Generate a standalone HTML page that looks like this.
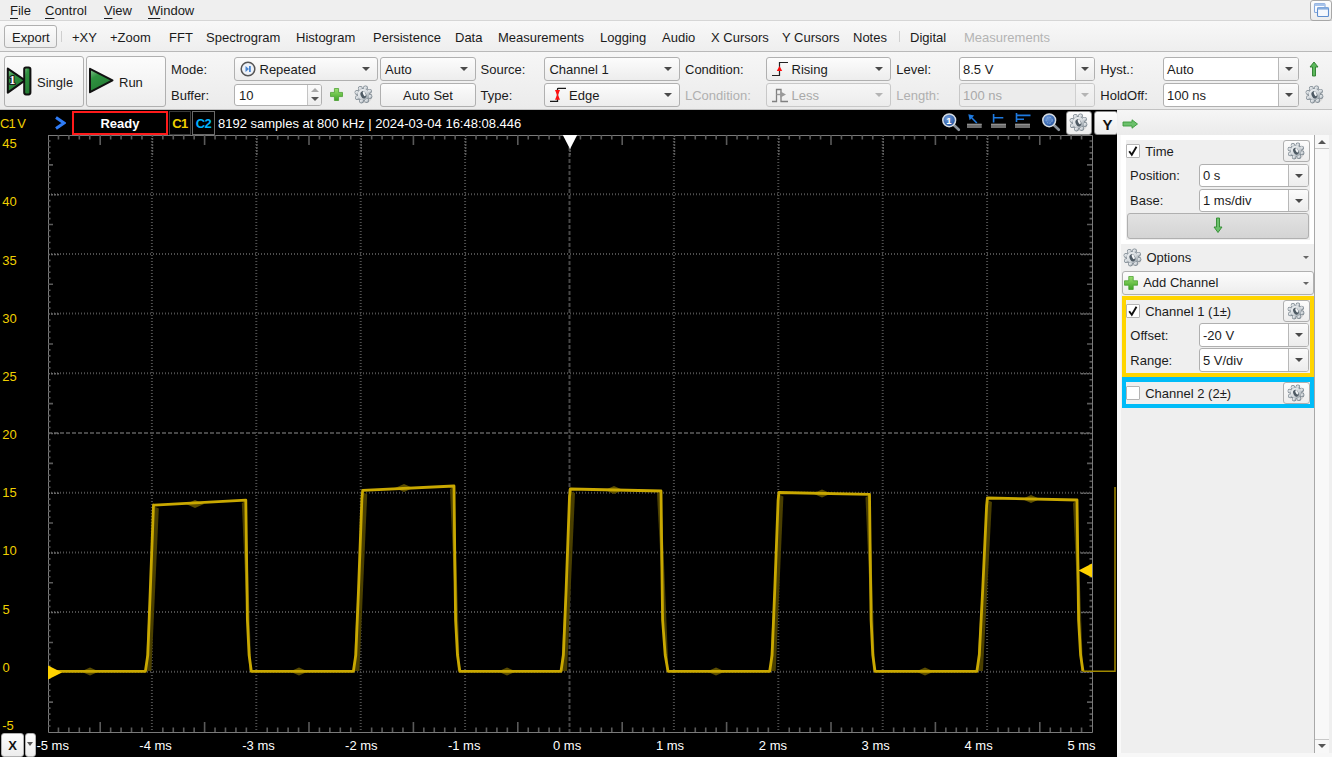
<!DOCTYPE html><html><head><meta charset="utf-8"><style>
html,body{margin:0;padding:0;}
body{width:1332px;height:757px;overflow:hidden;position:relative;background:#efefef;font-family:"Liberation Sans", sans-serif;}
.t{position:absolute;white-space:nowrap;}
u{text-decoration:none;border-bottom:1px solid currentColor;}
</style></head><body>
<div style="position:absolute;left:0px;top:0px;width:1332px;height:21px;box-sizing:border-box;background:#efefef;border-bottom:1px solid #d6d6d6;"></div>
<div class="t" style="left:10px;top:3.00px;font-size:13px;line-height:15px;color:#1b1b1b;"><span style="text-decoration:underline;text-underline-offset:2.5px;text-decoration-thickness:1.4px">F</span>ile</div>
<div class="t" style="left:45px;top:3.00px;font-size:13px;line-height:15px;color:#1b1b1b;"><span style="text-decoration:underline;text-underline-offset:2.5px;text-decoration-thickness:1.4px">C</span>ontrol</div>
<div class="t" style="left:104px;top:3.00px;font-size:13px;line-height:15px;color:#1b1b1b;"><span style="text-decoration:underline;text-underline-offset:2.5px;text-decoration-thickness:1.4px">V</span>iew</div>
<div class="t" style="left:148px;top:3.00px;font-size:13px;line-height:15px;color:#1b1b1b;"><span style="text-decoration:underline;text-underline-offset:2.5px;text-decoration-thickness:1.4px">W</span>indow</div>
<div style="position:absolute;left:1310px;top:0px;width:22px;height:21px;box-sizing:border-box;border:1px solid #a8a8a8;border-radius:3px;background:linear-gradient(#fdfdfd,#ececec);"></div>
<svg style="position:absolute;left:1313px;top:2px" width="18" height="16"><defs><linearGradient id="rw" x1="0" y1="0" x2="0" y2="1"><stop offset="0" stop-color="#9dbde6"/><stop offset="1" stop-color="#6f9cd6"/></linearGradient></defs><rect x="1.5" y="1.5" width="10.5" height="9" rx="1" fill="#fafcff" stroke="#86a9dc" stroke-width="1.1"/><rect x="1.5" y="1.5" width="10.5" height="2.5" fill="#a7c3ea"/><rect x="4.5" y="5.5" width="11" height="9" rx="1" fill="#f5f8fd" stroke="#5f8fd0" stroke-width="1.1"/><rect x="4.5" y="5.5" width="11" height="2" fill="url(#rw)"/></svg>
<div style="position:absolute;left:0px;top:21px;width:1332px;height:31px;box-sizing:border-box;background:linear-gradient(#f8f8f8,#eeeeee);border-bottom:1px solid #b9b9b9;"></div>
<div style="position:absolute;left:4px;top:25px;width:53px;height:23px;box-sizing:border-box;border:1px solid #b0b0b0;border-radius:3px;background:linear-gradient(#fcfcfc,#ededed);"></div>
<div class="t" style="left:12px;top:29.70px;font-size:13px;line-height:15px;color:#1b1b1b;">Export</div>
<div style="position:absolute;left:61px;top:31px;width:1px;height:11px;box-sizing:border-box;background:#cfcfcf;"></div>
<div class="t" style="left:72px;top:29.70px;font-size:13px;line-height:15px;color:#1b1b1b;">+XY</div>
<div class="t" style="left:110px;top:29.70px;font-size:13px;line-height:15px;color:#1b1b1b;">+Zoom</div>
<div class="t" style="left:169px;top:29.70px;font-size:13px;line-height:15px;color:#1b1b1b;">FFT</div>
<div class="t" style="left:206px;top:29.70px;font-size:13px;line-height:15px;color:#1b1b1b;">Spectrogram</div>
<div class="t" style="left:296px;top:29.70px;font-size:13px;line-height:15px;color:#1b1b1b;">Histogram</div>
<div class="t" style="left:373px;top:29.70px;font-size:13px;line-height:15px;color:#1b1b1b;">Persistence</div>
<div class="t" style="left:455px;top:29.70px;font-size:13px;line-height:15px;color:#1b1b1b;">Data</div>
<div class="t" style="left:498px;top:29.70px;font-size:13px;line-height:15px;color:#1b1b1b;">Measurements</div>
<div class="t" style="left:600px;top:29.70px;font-size:13px;line-height:15px;color:#1b1b1b;">Logging</div>
<div class="t" style="left:662px;top:29.70px;font-size:13px;line-height:15px;color:#1b1b1b;">Audio</div>
<div class="t" style="left:711px;top:29.70px;font-size:13px;line-height:15px;color:#1b1b1b;">X Cursors</div>
<div class="t" style="left:782px;top:29.70px;font-size:13px;line-height:15px;color:#1b1b1b;">Y Cursors</div>
<div class="t" style="left:853px;top:29.70px;font-size:13px;line-height:15px;color:#1b1b1b;">Notes</div>
<div class="t" style="left:910px;top:29.70px;font-size:13px;line-height:15px;color:#1b1b1b;">Digital</div>
<div style="position:absolute;left:899px;top:31px;width:1px;height:11px;box-sizing:border-box;background:#d0d0d0;"></div>
<div class="t" style="left:964px;top:29.70px;font-size:13px;line-height:15px;color:#b4b4b4;">Measurements</div>
<div style="position:absolute;left:0px;top:52px;width:1332px;height:58px;box-sizing:border-box;background:linear-gradient(#f6f6f6,#ebebeb);border-bottom:1px solid #c2c2c2;"></div>
<div style="position:absolute;left:4px;top:56px;width:80px;height:51px;box-sizing:border-box;border:1px solid #b0b0b0;border-radius:3px;background:linear-gradient(#fcfcfc,#ededed);"></div>
<svg style="position:absolute;left:6px;top:66px" width="27" height="30" viewBox="0 0 27 30"><defs><linearGradient id="gs1" x1="0" y1="0" x2="0.6" y2="1"><stop offset="0" stop-color="#8cc896"/><stop offset="0.35" stop-color="#2f9240"/><stop offset="1" stop-color="#237a33"/></linearGradient></defs><path d="M1.8,2.6 L19,14.4 L1.8,26.6 Z" fill="url(#gs1)" stroke="#111" stroke-width="2" stroke-linejoin="round"/><rect x="18.2" y="1.4" width="6.2" height="27" rx="1.8" fill="url(#gs1)" stroke="#111" stroke-width="2"/><text x="3.2" y="18.2" font-family="Liberation Serif" font-weight="bold" font-size="12.5" fill="#fff" stroke="#1a1a1a" stroke-width="2.2" paint-order="stroke" stroke-linejoin="round">1</text></svg>
<div class="t" style="left:37px;top:74.60px;font-size:13px;line-height:15px;color:#1b1b1b;">Single</div>
<div style="position:absolute;left:86px;top:56px;width:80px;height:51px;box-sizing:border-box;border:1px solid #b0b0b0;border-radius:3px;background:linear-gradient(#fcfcfc,#ededed);"></div>
<svg style="position:absolute;left:88px;top:67px" width="27" height="28" viewBox="0 0 27 28"><defs><linearGradient id="gs2" x1="0" y1="0" x2="0.6" y2="1"><stop offset="0" stop-color="#8cc896"/><stop offset="0.35" stop-color="#2f9240"/><stop offset="1" stop-color="#237a33"/></linearGradient></defs><path d="M2,1.8 L24.5,13.4 L2,25.2 Z" fill="url(#gs2)" stroke="#111" stroke-width="2" stroke-linejoin="round"/></svg>
<div class="t" style="left:119px;top:74.60px;font-size:13px;line-height:15px;color:#1b1b1b;">Run</div>
<div class="t" style="left:171px;top:62.00px;font-size:13px;line-height:15px;color:#1b1b1b;">Mode:</div>
<div class="t" style="left:171px;top:88.00px;font-size:13px;line-height:15px;color:#1b1b1b;">Buffer:</div>
<div style="position:absolute;left:234px;top:57px;width:144px;height:24px;box-sizing:border-box;border:1px solid #b0b0b0;border-radius:3px;background:linear-gradient(#fcfcfc,#ededed);"></div>
<svg style="position:absolute;left:240px;top:61px" width="16" height="16"><circle cx="8" cy="8" r="6.8" fill="#eef2f8" stroke="#555" stroke-width="1.5"/><path d="M5.5,5 L9,8 L5.5,11 Z" fill="#4a86d0"/><rect x="9" y="5" width="1.8" height="6" fill="#4a86d0"/></svg>
<div class="t" style="left:259.5px;top:61.60px;font-size:13px;line-height:15px;color:#1b1b1b;">Repeated</div>
<div style="position:absolute;left:362.0px;top:67.0px;width:0;height:0;border-left:4.0px solid transparent;border-right:4.0px solid transparent;border-top:4px solid #4a4a4a;"></div>
<div style="position:absolute;left:380px;top:57px;width:96px;height:24px;box-sizing:border-box;border:1px solid #b0b0b0;border-radius:3px;background:linear-gradient(#fcfcfc,#ededed);"></div>
<div class="t" style="left:385px;top:61.60px;font-size:13px;line-height:15px;color:#1b1b1b;">Auto</div>
<div style="position:absolute;left:460.0px;top:67.0px;width:0;height:0;border-left:4.0px solid transparent;border-right:4.0px solid transparent;border-top:4px solid #4a4a4a;"></div>
<div style="position:absolute;left:234px;top:84px;width:88px;height:22px;box-sizing:border-box;border:1px solid #b0b0b0;border-radius:3px;background:#fff;"></div>
<div style="position:absolute;left:307px;top:85px;width:14px;height:20px;box-sizing:border-box;border-left:1px solid #c4c4c4;border-radius:0 2px 2px 0;background:linear-gradient(#fbfbfb,#ececec);"></div>
<div style="position:absolute;left:310.5px;top:88px;width:0;height:0;border-left:4px solid transparent;border-right:4px solid transparent;border-bottom:4px solid #a8a8a8;"></div>
<div style="position:absolute;left:310.5px;top:97px;width:0;height:0;border-left:4px solid transparent;border-right:4px solid transparent;border-top:4px solid #555;"></div>
<div class="t" style="left:239px;top:87.70px;font-size:13px;line-height:15px;color:#1b1b1b;">10</div>
<svg style="position:absolute;left:330px;top:88px" width="13" height="13" viewBox="0 0 13 13"><defs><linearGradient id="pg1" x1="0" y1="0" x2="0" y2="1"><stop offset="0" stop-color="#9be070"/><stop offset="1" stop-color="#3ea325"/></linearGradient></defs><path d="M4.42,0.5 h4.16 v3.92 h3.92 v4.16 h-3.92 v3.92 h-4.16 v-3.92 h-3.92 v-4.16 h3.92 z" fill="url(#pg1)" stroke="#3f9a25" stroke-width="0.7"/></svg>
<svg style="position:absolute;left:355px;top:86px;overflow:visible" width="17" height="17" viewBox="0 0 17 17"><defs><linearGradient id="gg1" x1="0" y1="0" x2="1" y2="1"><stop offset="0" stop-color="#f4f6f8"/><stop offset="0.55" stop-color="#d3d8dc"/><stop offset="1" stop-color="#7f8a93"/></linearGradient></defs><ellipse cx="10.00" cy="10.50" rx="7.14" ry="6.46" fill="rgba(0,0,0,0.10)"/><g fill="#7b868f" stroke="#7b868f" stroke-width="1.3"><circle cx="15.00" cy="10.51" r="1.78"/><circle cx="11.67" cy="14.51" r="1.78"/><circle cx="6.49" cy="15.00" r="1.78"/><circle cx="2.49" cy="11.67" r="1.78"/><circle cx="2.00" cy="6.49" r="1.78"/><circle cx="5.33" cy="2.49" r="1.78"/><circle cx="10.51" cy="2.00" r="1.78"/><circle cx="14.51" cy="5.33" r="1.78"/><circle cx="8.5" cy="8.5" r="5.78"/></g><g fill="url(#gg1)"><circle cx="15.00" cy="10.51" r="1.78"/><circle cx="11.67" cy="14.51" r="1.78"/><circle cx="6.49" cy="15.00" r="1.78"/><circle cx="2.49" cy="11.67" r="1.78"/><circle cx="2.00" cy="6.49" r="1.78"/><circle cx="5.33" cy="2.49" r="1.78"/><circle cx="10.51" cy="2.00" r="1.78"/><circle cx="14.51" cy="5.33" r="1.78"/><circle cx="8.5" cy="8.5" r="5.78"/></g><ellipse cx="8.30" cy="8.70" rx="2.72" ry="3.74" transform="rotate(-25 8.5 8.5)" fill="#4e5a64"/><ellipse cx="9.52" cy="8.16" rx="1.19" ry="2.55" transform="rotate(-25 8.5 8.5)" fill="#f3f5f7"/></svg>
<div style="position:absolute;left:380px;top:83px;width:96px;height:24px;box-sizing:border-box;border:1px solid #b0b0b0;border-radius:3px;background:linear-gradient(#fcfcfc,#ededed);"></div>
<div class="t" style="left:380px;top:87.70px;font-size:13px;line-height:15px;color:#1b1b1b;width:96px;text-align:center;">Auto Set</div>
<div class="t" style="left:480.5px;top:62.00px;font-size:13px;line-height:15px;color:#1b1b1b;">Source:</div>
<div class="t" style="left:480.5px;top:87.70px;font-size:13px;line-height:15px;color:#1b1b1b;">Type:</div>
<div style="position:absolute;left:544px;top:57px;width:136px;height:24px;box-sizing:border-box;border:1px solid #b0b0b0;border-radius:3px;background:linear-gradient(#fcfcfc,#ededed);"></div>
<div class="t" style="left:549.4px;top:61.60px;font-size:13px;line-height:15px;color:#1b1b1b;">Channel 1</div>
<div style="position:absolute;left:664.0px;top:67.0px;width:0;height:0;border-left:4.0px solid transparent;border-right:4.0px solid transparent;border-top:4px solid #4a4a4a;"></div>
<div style="position:absolute;left:544px;top:83px;width:136px;height:24px;box-sizing:border-box;border:1px solid #b0b0b0;border-radius:3px;background:linear-gradient(#fcfcfc,#ededed);"></div>
<svg style="position:absolute;left:549px;top:87px" width="18" height="16"><path d="M1,14.4 H8.5 V2.2 Q8.5,1.4 9.3,1.4 H17" fill="none" stroke="#1a1a1a" stroke-width="1.3"/><path d="M6,3 H11 L9,8 L11,12.8 H6 L8,8 Z" fill="#ff1010"/></svg>
<div class="t" style="left:569px;top:87.60px;font-size:13px;line-height:15px;color:#1b1b1b;">Edge</div>
<div style="position:absolute;left:664.0px;top:93.0px;width:0;height:0;border-left:4.0px solid transparent;border-right:4.0px solid transparent;border-top:4px solid #4a4a4a;"></div>
<div class="t" style="left:685px;top:62.00px;font-size:13px;line-height:15px;color:#1b1b1b;">Condition:</div>
<div class="t" style="left:685px;top:87.70px;font-size:13px;line-height:15px;color:#b0b0b0;">LCondition:</div>
<div style="position:absolute;left:766px;top:57px;width:125px;height:24px;box-sizing:border-box;border:1px solid #b0b0b0;border-radius:3px;background:linear-gradient(#fcfcfc,#ededed);"></div>
<svg style="position:absolute;left:771px;top:61px" width="18" height="16"><path d="M1,14.5 H8.5 V1.5 H17" fill="none" stroke="#222" stroke-width="1.2"/><path d="M8.5,5 L11.2,10 L5.8,10 Z" fill="#ff0a0a"/></svg>
<div class="t" style="left:791.5px;top:61.60px;font-size:13px;line-height:15px;color:#1b1b1b;">Rising</div>
<div style="position:absolute;left:875.0px;top:67.0px;width:0;height:0;border-left:4.0px solid transparent;border-right:4.0px solid transparent;border-top:4px solid #4a4a4a;"></div>
<div style="position:absolute;left:766px;top:83px;width:125px;height:24px;box-sizing:border-box;border:1px solid #c8c8c8;border-radius:3px;background:linear-gradient(#f6f6f6,#ececec);"></div>
<svg style="position:absolute;left:771px;top:87px" width="18" height="16"><path d="M1,14.5 H5.5 V2.5 H10 V14.5 H17" fill="none" stroke="#808080" stroke-width="1.3"/><path d="M15,7.5 L9.5,4.5 L9.5,10.5 Z" fill="#9a9a9a"/><rect x="5.5" y="6.8" width="4.5" height="1.4" fill="#9a9a9a"/></svg>
<div class="t" style="left:791.5px;top:87.60px;font-size:13px;line-height:15px;color:#a9a9a9;">Less</div>
<div style="position:absolute;left:875.0px;top:93.0px;width:0;height:0;border-left:4.0px solid transparent;border-right:4.0px solid transparent;border-top:4px solid #b4b4b4;"></div>
<div class="t" style="left:896.3px;top:62.00px;font-size:13px;line-height:15px;color:#1b1b1b;">Level:</div>
<div class="t" style="left:896.3px;top:87.70px;font-size:13px;line-height:15px;color:#b0b0b0;">Length:</div>
<div style="position:absolute;left:959px;top:57px;width:136px;height:24px;box-sizing:border-box;border:1px solid #b0b0b0;border-radius:3px;background:#fff;"></div>
<div style="position:absolute;left:1075px;top:58px;width:19px;height:22px;box-sizing:border-box;border-left:1px solid #b8b8b8;border-radius:0 2px 2px 0;background:linear-gradient(#fbfbfb,#ececec);"></div>
<div class="t" style="left:963px;top:61.60px;font-size:13px;line-height:15px;color:#1b1b1b;">8.5 V</div>
<div style="position:absolute;left:1081.0px;top:67.0px;width:0;height:0;border-left:4.0px solid transparent;border-right:4.0px solid transparent;border-top:4px solid #4a4a4a;"></div>
<div style="position:absolute;left:959px;top:83px;width:136px;height:24px;box-sizing:border-box;border:1px solid #c8c8c8;border-radius:3px;background:#ececec;"></div>
<div style="position:absolute;left:1075px;top:84px;width:19px;height:22px;box-sizing:border-box;border-left:1px solid #cfcfcf;border-radius:0 2px 2px 0;background:linear-gradient(#f4f4f4,#ebebeb);"></div>
<div class="t" style="left:963px;top:87.60px;font-size:13px;line-height:15px;color:#a9a9a9;">100 ns</div>
<div style="position:absolute;left:1081.0px;top:93.0px;width:0;height:0;border-left:4.0px solid transparent;border-right:4.0px solid transparent;border-top:4px solid #b4b4b4;"></div>
<div class="t" style="left:1100.3px;top:62.00px;font-size:13px;line-height:15px;color:#1b1b1b;">Hyst.:</div>
<div class="t" style="left:1100.3px;top:87.70px;font-size:13px;line-height:15px;color:#1b1b1b;">HoldOff:</div>
<div style="position:absolute;left:1163px;top:57px;width:136px;height:24px;box-sizing:border-box;border:1px solid #b0b0b0;border-radius:3px;background:#fff;"></div>
<div style="position:absolute;left:1278px;top:58px;width:20px;height:22px;box-sizing:border-box;border-left:1px solid #b8b8b8;border-radius:0 2px 2px 0;background:linear-gradient(#fbfbfb,#ececec);"></div>
<div class="t" style="left:1167px;top:61.60px;font-size:13px;line-height:15px;color:#1b1b1b;">Auto</div>
<div style="position:absolute;left:1284.5px;top:67.0px;width:0;height:0;border-left:4.0px solid transparent;border-right:4.0px solid transparent;border-top:4px solid #4a4a4a;"></div>
<div style="position:absolute;left:1163px;top:83px;width:136px;height:24px;box-sizing:border-box;border:1px solid #b0b0b0;border-radius:3px;background:#fff;"></div>
<div style="position:absolute;left:1278px;top:84px;width:20px;height:22px;box-sizing:border-box;border-left:1px solid #b8b8b8;border-radius:0 2px 2px 0;background:linear-gradient(#fbfbfb,#ececec);"></div>
<div class="t" style="left:1167px;top:87.60px;font-size:13px;line-height:15px;color:#1b1b1b;">100 ns</div>
<div style="position:absolute;left:1284.5px;top:93.0px;width:0;height:0;border-left:4.0px solid transparent;border-right:4.0px solid transparent;border-top:4px solid #4a4a4a;"></div>
<svg style="position:absolute;left:1309px;top:61px" width="10" height="16"><path d="M5,1 L9,6 L6.5,6 L6.5,15 L3.5,15 L3.5,6 L1,6 Z" fill="#5cb85c" stroke="#2a7a2a" stroke-width="0.9"/></svg>
<svg style="position:absolute;left:1306px;top:86px;overflow:visible" width="17" height="17" viewBox="0 0 17 17"><defs><linearGradient id="gg2" x1="0" y1="0" x2="1" y2="1"><stop offset="0" stop-color="#f4f6f8"/><stop offset="0.55" stop-color="#d3d8dc"/><stop offset="1" stop-color="#7f8a93"/></linearGradient></defs><ellipse cx="10.00" cy="10.50" rx="7.14" ry="6.46" fill="rgba(0,0,0,0.10)"/><g fill="#7b868f" stroke="#7b868f" stroke-width="1.3"><circle cx="15.00" cy="10.51" r="1.78"/><circle cx="11.67" cy="14.51" r="1.78"/><circle cx="6.49" cy="15.00" r="1.78"/><circle cx="2.49" cy="11.67" r="1.78"/><circle cx="2.00" cy="6.49" r="1.78"/><circle cx="5.33" cy="2.49" r="1.78"/><circle cx="10.51" cy="2.00" r="1.78"/><circle cx="14.51" cy="5.33" r="1.78"/><circle cx="8.5" cy="8.5" r="5.78"/></g><g fill="url(#gg2)"><circle cx="15.00" cy="10.51" r="1.78"/><circle cx="11.67" cy="14.51" r="1.78"/><circle cx="6.49" cy="15.00" r="1.78"/><circle cx="2.49" cy="11.67" r="1.78"/><circle cx="2.00" cy="6.49" r="1.78"/><circle cx="5.33" cy="2.49" r="1.78"/><circle cx="10.51" cy="2.00" r="1.78"/><circle cx="14.51" cy="5.33" r="1.78"/><circle cx="8.5" cy="8.5" r="5.78"/></g><ellipse cx="8.30" cy="8.70" rx="2.72" ry="3.74" transform="rotate(-25 8.5 8.5)" fill="#4e5a64"/><ellipse cx="9.52" cy="8.16" rx="1.19" ry="2.55" transform="rotate(-25 8.5 8.5)" fill="#f3f5f7"/></svg>
<div style="position:absolute;left:0px;top:110px;width:1117px;height:647px;box-sizing:border-box;background:#000;"></div>
<div class="t" style="left:0px;top:116.00px;font-size:13px;line-height:15px;color:#f0d000;letter-spacing:-1px;">C1 V</div>
<svg style="position:absolute;left:54px;top:116px" width="12" height="14"><path d="M2,1.5 L10,7 L2,12.5" fill="none" stroke="#2f7cf6" stroke-width="3" stroke-linejoin="miter"/></svg>
<div style="position:absolute;left:72px;top:111px;width:96px;height:24px;box-sizing:border-box;border:2px solid #ff1a1a;background:#000;"></div>
<div class="t" style="left:72px;top:116.00px;font-size:13px;line-height:15px;color:#fff;width:96px;text-align:center;font-weight:bold;">Ready</div>
<div style="position:absolute;left:169px;top:111px;width:22px;height:24px;box-sizing:border-box;border:1px solid #3a3a3a;background:#000;"></div>
<div class="t" style="left:169px;top:116.00px;font-size:13px;line-height:15px;color:#f0d000;width:22px;text-align:center;font-weight:bold;letter-spacing:-0.5px;">C1</div>
<div style="position:absolute;left:192px;top:111px;width:23px;height:24px;box-sizing:border-box;border:1px solid #6a6a6a;background:#000;"></div>
<div class="t" style="left:192px;top:116.00px;font-size:13px;line-height:15px;color:#00b4ff;width:23px;text-align:center;font-weight:bold;letter-spacing:-0.5px;">C2</div>
<div class="t" style="left:218px;top:116.00px;font-size:13px;line-height:15px;color:#fff;">8192 samples at 800 kHz | 2024-03-04 16:48:08.446</div>
<svg style="position:absolute;left:0;top:0" width="1117" height="757" viewBox="0 0 1117 757"><line x1="151.9" y1="135" x2="151.9" y2="732" stroke="#4d4d4d" stroke-width="2" stroke-dasharray="1 2"/><line x1="256.3" y1="135" x2="256.3" y2="732" stroke="#4d4d4d" stroke-width="2" stroke-dasharray="1 2"/><line x1="360.7" y1="135" x2="360.7" y2="732" stroke="#4d4d4d" stroke-width="2" stroke-dasharray="1 2"/><line x1="465.1" y1="135" x2="465.1" y2="732" stroke="#4d4d4d" stroke-width="2" stroke-dasharray="1 2"/><line x1="569.5" y1="135" x2="569.5" y2="732" stroke="#474747" stroke-width="2" stroke-dasharray="4 2"/><line x1="673.9" y1="135" x2="673.9" y2="732" stroke="#4d4d4d" stroke-width="2" stroke-dasharray="1 2"/><line x1="778.3" y1="135" x2="778.3" y2="732" stroke="#4d4d4d" stroke-width="2" stroke-dasharray="1 2"/><line x1="882.7" y1="135" x2="882.7" y2="732" stroke="#4d4d4d" stroke-width="2" stroke-dasharray="1 2"/><line x1="987.1" y1="135" x2="987.1" y2="732" stroke="#4d4d4d" stroke-width="2" stroke-dasharray="1 2"/><line x1="48" y1="194.2" x2="1092" y2="194.2" stroke="#4d4d4d" stroke-width="2" stroke-dasharray="1 2"/><line x1="48" y1="253.9" x2="1092" y2="253.9" stroke="#4d4d4d" stroke-width="2" stroke-dasharray="1 2"/><line x1="48" y1="313.6" x2="1092" y2="313.6" stroke="#4d4d4d" stroke-width="2" stroke-dasharray="1 2"/><line x1="48" y1="373.3" x2="1092" y2="373.3" stroke="#4d4d4d" stroke-width="2" stroke-dasharray="1 2"/><line x1="48" y1="433.0" x2="1092" y2="433.0" stroke="#474747" stroke-width="2" stroke-dasharray="4 2"/><line x1="48" y1="492.7" x2="1092" y2="492.7" stroke="#4d4d4d" stroke-width="2" stroke-dasharray="1 2"/><line x1="48" y1="552.4" x2="1092" y2="552.4" stroke="#4d4d4d" stroke-width="2" stroke-dasharray="1 2"/><line x1="48" y1="612.1" x2="1092" y2="612.1" stroke="#4d4d4d" stroke-width="2" stroke-dasharray="1 2"/><line x1="48" y1="671.8" x2="1092" y2="671.8" stroke="#4d4d4d" stroke-width="2" stroke-dasharray="1 2"/><path d="M48.5,135 V732.5 H1092.5 V135.5 H48" fill="none" stroke="#7a7a7a" stroke-width="1"/><path d="M58.44,135 v4.5 M58.44,732 v-4.5 M68.88,135 v4.5 M68.88,732 v-4.5 M79.32,135 v4.5 M79.32,732 v-4.5 M89.76,135 v4.5 M89.76,732 v-4.5 M100.20,135 v10 M100.20,732 v-10 M110.64,135 v4.5 M110.64,732 v-4.5 M121.08,135 v4.5 M121.08,732 v-4.5 M131.52,135 v4.5 M131.52,732 v-4.5 M141.96,135 v4.5 M141.96,732 v-4.5 M162.84,135 v4.5 M162.84,732 v-4.5 M173.28,135 v4.5 M173.28,732 v-4.5 M183.72,135 v4.5 M183.72,732 v-4.5 M194.16,135 v4.5 M194.16,732 v-4.5 M204.60,135 v10 M204.60,732 v-10 M215.04,135 v4.5 M215.04,732 v-4.5 M225.48,135 v4.5 M225.48,732 v-4.5 M235.92,135 v4.5 M235.92,732 v-4.5 M246.36,135 v4.5 M246.36,732 v-4.5 M267.24,135 v4.5 M267.24,732 v-4.5 M277.68,135 v4.5 M277.68,732 v-4.5 M288.12,135 v4.5 M288.12,732 v-4.5 M298.56,135 v4.5 M298.56,732 v-4.5 M309.00,135 v10 M309.00,732 v-10 M319.44,135 v4.5 M319.44,732 v-4.5 M329.88,135 v4.5 M329.88,732 v-4.5 M340.32,135 v4.5 M340.32,732 v-4.5 M350.76,135 v4.5 M350.76,732 v-4.5 M371.64,135 v4.5 M371.64,732 v-4.5 M382.08,135 v4.5 M382.08,732 v-4.5 M392.52,135 v4.5 M392.52,732 v-4.5 M402.96,135 v4.5 M402.96,732 v-4.5 M413.40,135 v10 M413.40,732 v-10 M423.84,135 v4.5 M423.84,732 v-4.5 M434.28,135 v4.5 M434.28,732 v-4.5 M444.72,135 v4.5 M444.72,732 v-4.5 M455.16,135 v4.5 M455.16,732 v-4.5 M476.04,135 v4.5 M476.04,732 v-4.5 M486.48,135 v4.5 M486.48,732 v-4.5 M496.92,135 v4.5 M496.92,732 v-4.5 M507.36,135 v4.5 M507.36,732 v-4.5 M517.80,135 v10 M517.80,732 v-10 M528.24,135 v4.5 M528.24,732 v-4.5 M538.68,135 v4.5 M538.68,732 v-4.5 M549.12,135 v4.5 M549.12,732 v-4.5 M559.56,135 v4.5 M559.56,732 v-4.5 M580.44,135 v4.5 M580.44,732 v-4.5 M590.88,135 v4.5 M590.88,732 v-4.5 M601.32,135 v4.5 M601.32,732 v-4.5 M611.76,135 v4.5 M611.76,732 v-4.5 M622.20,135 v10 M622.20,732 v-10 M632.64,135 v4.5 M632.64,732 v-4.5 M643.08,135 v4.5 M643.08,732 v-4.5 M653.52,135 v4.5 M653.52,732 v-4.5 M663.96,135 v4.5 M663.96,732 v-4.5 M684.84,135 v4.5 M684.84,732 v-4.5 M695.28,135 v4.5 M695.28,732 v-4.5 M705.72,135 v4.5 M705.72,732 v-4.5 M716.16,135 v4.5 M716.16,732 v-4.5 M726.60,135 v10 M726.60,732 v-10 M737.04,135 v4.5 M737.04,732 v-4.5 M747.48,135 v4.5 M747.48,732 v-4.5 M757.92,135 v4.5 M757.92,732 v-4.5 M768.36,135 v4.5 M768.36,732 v-4.5 M789.24,135 v4.5 M789.24,732 v-4.5 M799.68,135 v4.5 M799.68,732 v-4.5 M810.12,135 v4.5 M810.12,732 v-4.5 M820.56,135 v4.5 M820.56,732 v-4.5 M831.00,135 v10 M831.00,732 v-10 M841.44,135 v4.5 M841.44,732 v-4.5 M851.88,135 v4.5 M851.88,732 v-4.5 M862.32,135 v4.5 M862.32,732 v-4.5 M872.76,135 v4.5 M872.76,732 v-4.5 M893.64,135 v4.5 M893.64,732 v-4.5 M904.08,135 v4.5 M904.08,732 v-4.5 M914.52,135 v4.5 M914.52,732 v-4.5 M924.96,135 v4.5 M924.96,732 v-4.5 M935.40,135 v10 M935.40,732 v-10 M945.84,135 v4.5 M945.84,732 v-4.5 M956.28,135 v4.5 M956.28,732 v-4.5 M966.72,135 v4.5 M966.72,732 v-4.5 M977.16,135 v4.5 M977.16,732 v-4.5 M998.04,135 v4.5 M998.04,732 v-4.5 M1008.48,135 v4.5 M1008.48,732 v-4.5 M1018.92,135 v4.5 M1018.92,732 v-4.5 M1029.36,135 v4.5 M1029.36,732 v-4.5 M1039.80,135 v10 M1039.80,732 v-10 M1050.24,135 v4.5 M1050.24,732 v-4.5 M1060.68,135 v4.5 M1060.68,732 v-4.5 M1071.12,135 v4.5 M1071.12,732 v-4.5 M1081.56,135 v4.5 M1081.56,732 v-4.5" stroke="#5a5a5a" stroke-width="1.6"/><path d="M152.40,135 v20 M256.80,135 v20 M361.20,135 v20 M465.60,135 v20 M570.00,135 v20 M674.40,135 v20 M778.80,135 v20 M883.20,135 v20 M987.60,135 v20" stroke="#5a5a5a" stroke-width="1.6" stroke-dasharray="2 1"/><path d="M48,140.97 h2.5 M1092,140.97 h-2.5 M48,146.94 h2.5 M1092,146.94 h-2.5 M48,152.91 h2.5 M1092,152.91 h-2.5 M48,158.88 h2.5 M1092,158.88 h-2.5 M48,164.85 h5 M1092,164.85 h-5 M48,170.82 h2.5 M1092,170.82 h-2.5 M48,176.79 h2.5 M1092,176.79 h-2.5 M48,182.76 h2.5 M1092,182.76 h-2.5 M48,188.73 h2.5 M1092,188.73 h-2.5 M48,200.67 h2.5 M1092,200.67 h-2.5 M48,206.64 h2.5 M1092,206.64 h-2.5 M48,212.61 h2.5 M1092,212.61 h-2.5 M48,218.58 h2.5 M1092,218.58 h-2.5 M48,224.55 h5 M1092,224.55 h-5 M48,230.52 h2.5 M1092,230.52 h-2.5 M48,236.49 h2.5 M1092,236.49 h-2.5 M48,242.46 h2.5 M1092,242.46 h-2.5 M48,248.43 h2.5 M1092,248.43 h-2.5 M48,260.37 h2.5 M1092,260.37 h-2.5 M48,266.34 h2.5 M1092,266.34 h-2.5 M48,272.31 h2.5 M1092,272.31 h-2.5 M48,278.28 h2.5 M1092,278.28 h-2.5 M48,284.25 h5 M1092,284.25 h-5 M48,290.22 h2.5 M1092,290.22 h-2.5 M48,296.19 h2.5 M1092,296.19 h-2.5 M48,302.16 h2.5 M1092,302.16 h-2.5 M48,308.13 h2.5 M1092,308.13 h-2.5 M48,320.07 h2.5 M1092,320.07 h-2.5 M48,326.04 h2.5 M1092,326.04 h-2.5 M48,332.01 h2.5 M1092,332.01 h-2.5 M48,337.98 h2.5 M1092,337.98 h-2.5 M48,343.95 h5 M1092,343.95 h-5 M48,349.92 h2.5 M1092,349.92 h-2.5 M48,355.89 h2.5 M1092,355.89 h-2.5 M48,361.86 h2.5 M1092,361.86 h-2.5 M48,367.83 h2.5 M1092,367.83 h-2.5 M48,379.77 h2.5 M1092,379.77 h-2.5 M48,385.74 h2.5 M1092,385.74 h-2.5 M48,391.71 h2.5 M1092,391.71 h-2.5 M48,397.68 h2.5 M1092,397.68 h-2.5 M48,403.65 h5 M1092,403.65 h-5 M48,409.62 h2.5 M1092,409.62 h-2.5 M48,415.59 h2.5 M1092,415.59 h-2.5 M48,421.56 h2.5 M1092,421.56 h-2.5 M48,427.53 h2.5 M1092,427.53 h-2.5 M48,439.47 h2.5 M1092,439.47 h-2.5 M48,445.44 h2.5 M1092,445.44 h-2.5 M48,451.41 h2.5 M1092,451.41 h-2.5 M48,457.38 h2.5 M1092,457.38 h-2.5 M48,463.35 h5 M1092,463.35 h-5 M48,469.32 h2.5 M1092,469.32 h-2.5 M48,475.29 h2.5 M1092,475.29 h-2.5 M48,481.26 h2.5 M1092,481.26 h-2.5 M48,487.23 h2.5 M1092,487.23 h-2.5 M48,499.17 h2.5 M1092,499.17 h-2.5 M48,505.14 h2.5 M1092,505.14 h-2.5 M48,511.11 h2.5 M1092,511.11 h-2.5 M48,517.08 h2.5 M1092,517.08 h-2.5 M48,523.05 h5 M1092,523.05 h-5 M48,529.02 h2.5 M1092,529.02 h-2.5 M48,534.99 h2.5 M1092,534.99 h-2.5 M48,540.96 h2.5 M1092,540.96 h-2.5 M48,546.93 h2.5 M1092,546.93 h-2.5 M48,558.87 h2.5 M1092,558.87 h-2.5 M48,564.84 h2.5 M1092,564.84 h-2.5 M48,570.81 h2.5 M1092,570.81 h-2.5 M48,576.78 h2.5 M1092,576.78 h-2.5 M48,582.75 h5 M1092,582.75 h-5 M48,588.72 h2.5 M1092,588.72 h-2.5 M48,594.69 h2.5 M1092,594.69 h-2.5 M48,600.66 h2.5 M1092,600.66 h-2.5 M48,606.63 h2.5 M1092,606.63 h-2.5 M48,618.57 h2.5 M1092,618.57 h-2.5 M48,624.54 h2.5 M1092,624.54 h-2.5 M48,630.51 h2.5 M1092,630.51 h-2.5 M48,636.48 h2.5 M1092,636.48 h-2.5 M48,642.45 h5 M1092,642.45 h-5 M48,648.42 h2.5 M1092,648.42 h-2.5 M48,654.39 h2.5 M1092,654.39 h-2.5 M48,660.36 h2.5 M1092,660.36 h-2.5 M48,666.33 h2.5 M1092,666.33 h-2.5 M48,678.27 h2.5 M1092,678.27 h-2.5 M48,684.24 h2.5 M1092,684.24 h-2.5 M48,690.21 h2.5 M1092,690.21 h-2.5 M48,696.18 h2.5 M1092,696.18 h-2.5 M48,702.15 h5 M1092,702.15 h-5 M48,708.12 h2.5 M1092,708.12 h-2.5 M48,714.09 h2.5 M1092,714.09 h-2.5 M48,720.06 h2.5 M1092,720.06 h-2.5 M48,726.03 h2.5 M1092,726.03 h-2.5" stroke="#5a5a5a" stroke-width="1.6"/><path d="M48,194.70 h12 M1092,194.70 h-12 M48,254.40 h12 M1092,254.40 h-12 M48,314.10 h12 M1092,314.10 h-12 M48,373.80 h12 M1092,373.80 h-12 M48,433.50 h12 M1092,433.50 h-12 M48,493.20 h12 M1092,493.20 h-12 M48,552.90 h12 M1092,552.90 h-12 M48,612.60 h12 M1092,612.60 h-12 M48,672.30 h12 M1092,672.30 h-12" stroke="#666" stroke-width="1.5" stroke-dasharray="2 1"/><polygon points="145.4,671 154.3,506.4 158.8,508.4 151.4,671" fill="#4a3f00"/><polygon points="353.4,671 362.7,492.3 367.2,494.3 359.4,671" fill="#4a3f00"/><polygon points="561.0,671 570.5,491.0 575.0,493.0 567.0,671" fill="#4a3f00"/><polygon points="769.7,671 778.9,494.5 783.4,496.5 775.7,671" fill="#4a3f00"/><polygon points="976.9,671 987.4,500.0 991.9,502.0 982.9,671" fill="#4a3f00"/><polygon points="241.8,503.2 245.8,500.2 251.3,671 249.3,671" fill="#4a3f00"/><polygon points="450.0,489.0 454.0,486.0 459.8,671 457.8,671" fill="#4a3f00"/><polygon points="657.0,494.0 661.0,491.0 668.5,671 666.5,671" fill="#4a3f00"/><polygon points="865.5,497.4 869.5,494.4 875.0,671 873.0,671" fill="#4a3f00"/><polygon points="1073.0,503.0 1077.0,500.0 1083.0,671 1081.0,671" fill="#4a3f00"/><polygon points="186,504 195,500 204,504 195,508" fill="#5c4e00"/><polygon points="395,488 404,484 413,488 404,492" fill="#5c4e00"/><polygon points="605,490 614,486 623,490 614,494" fill="#5c4e00"/><polygon points="813,493.5 822,489.5 831,493.5 822,497.5" fill="#5c4e00"/><polygon points="1022,499 1031,495 1040,499 1031,503" fill="#5c4e00"/><polygon points="81,671.5 90,667.5 99,671.5 90,675.5" fill="#5c4e00"/><polygon points="290,671.5 299,667.5 308,671.5 299,675.5" fill="#5c4e00"/><polygon points="498,671.5 507,667.5 516,671.5 507,675.5" fill="#5c4e00"/><polygon points="707,671.5 716,667.5 725,671.5 716,675.5" fill="#5c4e00"/><polygon points="916,671.5 925,667.5 934,671.5 925,675.5" fill="#5c4e00"/><polyline points="48,671.3 145.4,671.3 147.8,655 150.29500000000002,590 153.5,505 154.3,505.2 245.8,500.2 246.60000000000002,560 247.4,620 249.10000000000002,655 251.3,671.3 353.4,671.3 355.79999999999995,655 358.515,590 361.9,498.3 362.7,490.3 454,486 454.8,560 455.6,620 457.48,655 459.8,671.3 561,671.3 563.4,655 566.115,590 569.5,497 570.3,489 661,491 661.8,560 662.6,620 665.2,655 668,671.3 769.7,671.3 772.1,655 774.76,590 778.1,500.5 778.9,492.5 869.5,494.4 870.3,560 871.1,620 872.8,655 875,671.3 976.9,671.3 979.3,655 982.675,590 986.6,506 987.4,498 1077,500 1077.8,560 1078.6,620 1080.6,655 1083,671.3" fill="none" stroke="#c9a800" stroke-width="2.8" stroke-linejoin="round"/><polyline points="1083,671.3 1115,671.3 1115,487" fill="none" stroke="#a08800" stroke-width="1.5"/><polygon points="48,665.5 62,672.5 48,679.5" fill="#ffd200"/><polygon points="1092,563.5 1078.5,570.5 1092,577.5" fill="#ffd200"/><polygon points="562.8,135 577.2,135 570,149" fill="#fff"/></svg>
<div class="t" style="left:2.2px;top:136.30px;font-size:13px;line-height:15px;color:#f0d000;">45</div>
<div class="t" style="left:2.2px;top:194.47px;font-size:13px;line-height:15px;color:#f0d000;">40</div>
<div class="t" style="left:2.2px;top:252.64px;font-size:13px;line-height:15px;color:#f0d000;">35</div>
<div class="t" style="left:2.2px;top:310.81px;font-size:13px;line-height:15px;color:#f0d000;">30</div>
<div class="t" style="left:2.2px;top:368.98px;font-size:13px;line-height:15px;color:#f0d000;">25</div>
<div class="t" style="left:2.2px;top:427.15px;font-size:13px;line-height:15px;color:#f0d000;">20</div>
<div class="t" style="left:2.2px;top:485.32px;font-size:13px;line-height:15px;color:#f0d000;">15</div>
<div class="t" style="left:2.2px;top:543.49px;font-size:13px;line-height:15px;color:#f0d000;">10</div>
<div class="t" style="left:2.5px;top:601.66px;font-size:13px;line-height:15px;color:#f0d000;">5</div>
<div class="t" style="left:2.5px;top:659.83px;font-size:13px;line-height:15px;color:#f0d000;">0</div>
<div class="t" style="left:2.2px;top:718.00px;font-size:13px;line-height:15px;color:#f0d000;">-5</div>
<div class="t" style="left:12.7px;width:80px;text-align:center;top:737.5px;font-size:13px;line-height:15px;color:#fff">-5 ms</div>
<div class="t" style="left:115.6px;width:80px;text-align:center;top:737.5px;font-size:13px;line-height:15px;color:#fff">-4 ms</div>
<div class="t" style="left:218.5px;width:80px;text-align:center;top:737.5px;font-size:13px;line-height:15px;color:#fff">-3 ms</div>
<div class="t" style="left:321.3px;width:80px;text-align:center;top:737.5px;font-size:13px;line-height:15px;color:#fff">-2 ms</div>
<div class="t" style="left:424.2px;width:80px;text-align:center;top:737.5px;font-size:13px;line-height:15px;color:#fff">-1 ms</div>
<div class="t" style="left:527.1px;width:80px;text-align:center;top:737.5px;font-size:13px;line-height:15px;color:#fff">0 ms</div>
<div class="t" style="left:630.0px;width:80px;text-align:center;top:737.5px;font-size:13px;line-height:15px;color:#fff">1 ms</div>
<div class="t" style="left:732.9px;width:80px;text-align:center;top:737.5px;font-size:13px;line-height:15px;color:#fff">2 ms</div>
<div class="t" style="left:835.7px;width:80px;text-align:center;top:737.5px;font-size:13px;line-height:15px;color:#fff">3 ms</div>
<div class="t" style="left:938.6px;width:80px;text-align:center;top:737.5px;font-size:13px;line-height:15px;color:#fff">4 ms</div>
<div class="t" style="left:1041.5px;width:80px;text-align:center;top:737.5px;font-size:13px;line-height:15px;color:#fff">5 ms</div>
<div style="position:absolute;left:1px;top:733px;width:23px;height:24px;box-sizing:border-box;border:1px solid #b0b0b0;border-radius:3px;background:linear-gradient(#fdfdfd,#ececec);"></div>
<div class="t" style="left:1px;top:738.00px;font-size:13px;line-height:15px;color:#111;width:23px;text-align:center;font-weight:bold;">X</div>
<div style="position:absolute;left:25px;top:733px;width:11px;height:24px;box-sizing:border-box;border:1px solid #b0b0b0;border-radius:3px;background:linear-gradient(#fdfdfd,#ececec);"></div>
<div style="position:absolute;left:27.0px;top:742.0px;width:0;height:0;border-left:3.5px solid transparent;border-right:3.5px solid transparent;border-top:4px solid #555;"></div>
<svg style="position:absolute;left:940px;top:112px" width="122" height="20"><defs><radialGradient id="mg" cx="0.4" cy="0.35" r="0.7"><stop offset="0" stop-color="#6f9ad8"/><stop offset="1" stop-color="#1f4f9a"/></radialGradient></defs><path d="M13.6,12.7 L18.8,17.8" stroke="#8c949c" stroke-width="2.6" stroke-linecap="round"/><circle cx="9.2" cy="8.3" r="6.4" fill="url(#mg)" stroke="#d6dce2" stroke-width="1.5"/><text x="6.3" y="12" font-family="Liberation Sans" font-weight="bold" font-size="9.5" fill="#fff">1</text><path d="M30,4 L36.8,11" stroke="#1e7ae0" stroke-width="1.6" fill="none"/><path d="M28.3,2.3 L34.2,3.6 L29.6,8.2 Z" fill="#1e7ae0"/><rect x="27" y="11.8" width="14.7" height="4.2" fill="#6e6e6e"/><rect x="27" y="11.8" width="14.7" height="1" fill="#9a9a9a"/><path d="M53.6,2 V10.5 M53.6,5.8 H63.3" stroke="#1e7ae0" stroke-width="1.6"/><rect x="51" y="11.8" width="15" height="4.2" fill="#6e6e6e"/><rect x="51" y="11.8" width="15" height="1" fill="#9a9a9a"/><path d="M76.5,1 V10 M76.5,3.4 H90.5 M76.5,7.3 H84" stroke="#1e7ae0" stroke-width="1.6"/><rect x="75" y="11.8" width="15" height="4.2" fill="#6e6e6e"/><rect x="75" y="11.8" width="15" height="1" fill="#9a9a9a"/><path d="M113.6,12.7 L118.8,17.8" stroke="#8c949c" stroke-width="2.6" stroke-linecap="round"/><circle cx="109.2" cy="8.3" r="6.4" fill="url(#mg)" stroke="#d6dce2" stroke-width="1.5"/><circle cx="109.2" cy="8.3" r="3" fill="none" stroke="#8fb0e0" stroke-width="1" stroke-dasharray="1.6 1.2"/></svg>
<div style="position:absolute;left:1066px;top:111px;width:26px;height:24px;box-sizing:border-box;border:1px solid #8a8a8a;border-radius:3px;background:linear-gradient(#fdfdfd,#ececec);"></div>
<svg style="position:absolute;left:1070px;top:114px;overflow:visible" width="17" height="17" viewBox="0 0 17 17"><defs><linearGradient id="gg3" x1="0" y1="0" x2="1" y2="1"><stop offset="0" stop-color="#f4f6f8"/><stop offset="0.55" stop-color="#d3d8dc"/><stop offset="1" stop-color="#7f8a93"/></linearGradient></defs><ellipse cx="10.00" cy="10.50" rx="7.14" ry="6.46" fill="rgba(0,0,0,0.10)"/><g fill="#7b868f" stroke="#7b868f" stroke-width="1.3"><circle cx="15.00" cy="10.51" r="1.78"/><circle cx="11.67" cy="14.51" r="1.78"/><circle cx="6.49" cy="15.00" r="1.78"/><circle cx="2.49" cy="11.67" r="1.78"/><circle cx="2.00" cy="6.49" r="1.78"/><circle cx="5.33" cy="2.49" r="1.78"/><circle cx="10.51" cy="2.00" r="1.78"/><circle cx="14.51" cy="5.33" r="1.78"/><circle cx="8.5" cy="8.5" r="5.78"/></g><g fill="url(#gg3)"><circle cx="15.00" cy="10.51" r="1.78"/><circle cx="11.67" cy="14.51" r="1.78"/><circle cx="6.49" cy="15.00" r="1.78"/><circle cx="2.49" cy="11.67" r="1.78"/><circle cx="2.00" cy="6.49" r="1.78"/><circle cx="5.33" cy="2.49" r="1.78"/><circle cx="10.51" cy="2.00" r="1.78"/><circle cx="14.51" cy="5.33" r="1.78"/><circle cx="8.5" cy="8.5" r="5.78"/></g><ellipse cx="8.30" cy="8.70" rx="2.72" ry="3.74" transform="rotate(-25 8.5 8.5)" fill="#4e5a64"/><ellipse cx="9.52" cy="8.16" rx="1.19" ry="2.55" transform="rotate(-25 8.5 8.5)" fill="#f3f5f7"/></svg>
<div style="position:absolute;left:1094px;top:111px;width:24px;height:24px;box-sizing:border-box;border:1px solid #8a8a8a;border-radius:3px;background:linear-gradient(#fdfdfd,#ececec);"></div>
<div class="t" style="left:1095.5px;top:116.50px;font-size:13px;line-height:15px;color:#111;width:24px;text-align:center;font-size:15px;font-weight:bold;">Y</div>
<div style="position:absolute;left:1117px;top:110px;width:215px;height:647px;box-sizing:border-box;background:#efefef;"></div>
<div style="position:absolute;left:1117px;top:135px;width:4px;height:618px;box-sizing:border-box;background:#f9f9f9;"></div>
<div style="position:absolute;left:1118px;top:110px;width:214px;height:25px;box-sizing:border-box;background:linear-gradient(#f6f6f6,#ebebeb);"></div>
<svg style="position:absolute;left:1122px;top:119px" width="17" height="10"><path d="M1,3 H10 V0.8 L15.5,5 L10,9.2 V7 H1 Z" fill="#6cc06c" stroke="#3a9a3a" stroke-width="0.9"/></svg>
<div style="position:absolute;left:1121px;top:135px;width:193px;height:618px;box-sizing:border-box;background:#efefef;"></div>
<div style="position:absolute;left:1121px;top:135px;width:193px;height:109px;box-sizing:border-box;background:#fff;"></div>
<div style="position:absolute;left:1126px;top:140px;width:184px;height:100px;box-sizing:border-box;background:#efefef;"></div>
<div style="position:absolute;left:1314px;top:135px;width:15px;height:618px;box-sizing:border-box;background:#f8f8f8;border-left:1px solid #a8a8a8;"></div>
<div style="position:absolute;left:1315px;top:148px;width:14px;height:1px;box-sizing:border-box;background:#c8c8c8;"></div>
<div style="position:absolute;left:1315px;top:739px;width:14px;height:1px;box-sizing:border-box;background:#c8c8c8;"></div>
<div style="position:absolute;left:1317.5px;top:139.5px;width:0;height:0;border-left:4.5px solid transparent;border-right:4.5px solid transparent;border-bottom:4.5px solid #555;"></div>
<div style="position:absolute;left:1317.5px;top:743.5px;width:0;height:0;border-left:4.5px solid transparent;border-right:4.5px solid transparent;border-top:4.5px solid #555;"></div>
<div style="position:absolute;left:1117px;top:753px;width:215px;height:4px;box-sizing:border-box;background:#f7f7f7;"></div>
<div style="position:absolute;left:1126px;top:144px;width:14px;height:14px;box-sizing:border-box;border:1px solid #b4b4b4;background:#fff;border-radius:1px;"></div>
<svg style="position:absolute;left:1126px;top:144px" width="14" height="14"><path d="M3.2,7.2 L5.8,10.8 L10.5,2.8" fill="none" stroke="#111" stroke-width="1.9"/></svg>
<div class="t" style="left:1145.3px;top:144.00px;font-size:13px;line-height:15px;color:#1b1b1b;">Time</div>
<div style="position:absolute;left:1283px;top:140px;width:27px;height:22px;box-sizing:border-box;border:1px solid #b0b0b0;border-radius:3px;background:linear-gradient(#fcfcfc,#ededed);"></div>
<svg style="position:absolute;left:1288px;top:143px;overflow:visible" width="16" height="16" viewBox="0 0 16 16"><defs><linearGradient id="gg4" x1="0" y1="0" x2="1" y2="1"><stop offset="0" stop-color="#f4f6f8"/><stop offset="0.55" stop-color="#d3d8dc"/><stop offset="1" stop-color="#7f8a93"/></linearGradient></defs><ellipse cx="9.50" cy="10.00" rx="6.72" ry="6.08" fill="rgba(0,0,0,0.10)"/><g fill="#7b868f" stroke="#7b868f" stroke-width="1.3"><circle cx="14.11" cy="9.89" r="1.68"/><circle cx="10.99" cy="13.66" r="1.68"/><circle cx="6.11" cy="14.11" r="1.68"/><circle cx="2.34" cy="10.99" r="1.68"/><circle cx="1.89" cy="6.11" r="1.68"/><circle cx="5.01" cy="2.34" r="1.68"/><circle cx="9.89" cy="1.89" r="1.68"/><circle cx="13.66" cy="5.01" r="1.68"/><circle cx="8.0" cy="8.0" r="5.44"/></g><g fill="url(#gg4)"><circle cx="14.11" cy="9.89" r="1.68"/><circle cx="10.99" cy="13.66" r="1.68"/><circle cx="6.11" cy="14.11" r="1.68"/><circle cx="2.34" cy="10.99" r="1.68"/><circle cx="1.89" cy="6.11" r="1.68"/><circle cx="5.01" cy="2.34" r="1.68"/><circle cx="9.89" cy="1.89" r="1.68"/><circle cx="13.66" cy="5.01" r="1.68"/><circle cx="8.0" cy="8.0" r="5.44"/></g><ellipse cx="7.80" cy="8.20" rx="2.56" ry="3.52" transform="rotate(-25 8.0 8.0)" fill="#4e5a64"/><ellipse cx="8.96" cy="7.68" rx="1.12" ry="2.40" transform="rotate(-25 8.0 8.0)" fill="#f3f5f7"/></svg>
<div class="t" style="left:1130px;top:168.00px;font-size:13px;line-height:15px;color:#1b1b1b;">Position:</div>
<div style="position:absolute;left:1199px;top:164px;width:110px;height:23px;box-sizing:border-box;border:1px solid #b0b0b0;border-radius:3px;background:#fff;"></div>
<div style="position:absolute;left:1288px;top:165px;width:20px;height:21px;box-sizing:border-box;border-left:1px solid #b8b8b8;border-radius:0 2px 2px 0;background:linear-gradient(#fbfbfb,#ececec);"></div>
<div class="t" style="left:1203px;top:168.10px;font-size:13px;line-height:15px;color:#1b1b1b;">0 s</div>
<div style="position:absolute;left:1294.5px;top:173.5px;width:0;height:0;border-left:4.0px solid transparent;border-right:4.0px solid transparent;border-top:4px solid #4a4a4a;"></div>
<div class="t" style="left:1130px;top:193.20px;font-size:13px;line-height:15px;color:#1b1b1b;">Base:</div>
<div style="position:absolute;left:1199px;top:189px;width:110px;height:23px;box-sizing:border-box;border:1px solid #b0b0b0;border-radius:3px;background:#fff;"></div>
<div style="position:absolute;left:1288px;top:190px;width:20px;height:21px;box-sizing:border-box;border-left:1px solid #b8b8b8;border-radius:0 2px 2px 0;background:linear-gradient(#fbfbfb,#ececec);"></div>
<div class="t" style="left:1203px;top:193.10px;font-size:13px;line-height:15px;color:#1b1b1b;">1 ms/div</div>
<div style="position:absolute;left:1294.5px;top:198.5px;width:0;height:0;border-left:4.0px solid transparent;border-right:4.0px solid transparent;border-top:4px solid #4a4a4a;"></div>
<div style="position:absolute;left:1127px;top:213px;width:182px;height:26px;box-sizing:border-box;border:1px solid #b0b0b0;border-radius:3px;background:linear-gradient(#e2e2e2,#d4d4d4);"></div>
<svg style="position:absolute;left:1213px;top:217px" width="10" height="17"><path d="M3.5,1 H6.5 V10 H9 L5,15.5 L1,10 H3.5 Z" fill="#6cc06c" stroke="#2f8a2f" stroke-width="0.9"/></svg>
<svg style="position:absolute;left:1124px;top:249px;overflow:visible" width="17" height="17" viewBox="0 0 17 17"><defs><linearGradient id="gg5" x1="0" y1="0" x2="1" y2="1"><stop offset="0" stop-color="#f4f6f8"/><stop offset="0.55" stop-color="#d3d8dc"/><stop offset="1" stop-color="#7f8a93"/></linearGradient></defs><ellipse cx="10.00" cy="10.50" rx="7.14" ry="6.46" fill="rgba(0,0,0,0.10)"/><g fill="#7b868f" stroke="#7b868f" stroke-width="1.3"><circle cx="15.00" cy="10.51" r="1.78"/><circle cx="11.67" cy="14.51" r="1.78"/><circle cx="6.49" cy="15.00" r="1.78"/><circle cx="2.49" cy="11.67" r="1.78"/><circle cx="2.00" cy="6.49" r="1.78"/><circle cx="5.33" cy="2.49" r="1.78"/><circle cx="10.51" cy="2.00" r="1.78"/><circle cx="14.51" cy="5.33" r="1.78"/><circle cx="8.5" cy="8.5" r="5.78"/></g><g fill="url(#gg5)"><circle cx="15.00" cy="10.51" r="1.78"/><circle cx="11.67" cy="14.51" r="1.78"/><circle cx="6.49" cy="15.00" r="1.78"/><circle cx="2.49" cy="11.67" r="1.78"/><circle cx="2.00" cy="6.49" r="1.78"/><circle cx="5.33" cy="2.49" r="1.78"/><circle cx="10.51" cy="2.00" r="1.78"/><circle cx="14.51" cy="5.33" r="1.78"/><circle cx="8.5" cy="8.5" r="5.78"/></g><ellipse cx="8.30" cy="8.70" rx="2.72" ry="3.74" transform="rotate(-25 8.5 8.5)" fill="#4e5a64"/><ellipse cx="9.52" cy="8.16" rx="1.19" ry="2.55" transform="rotate(-25 8.5 8.5)" fill="#f3f5f7"/></svg>
<div class="t" style="left:1146.4px;top:250.40px;font-size:13px;line-height:15px;color:#1b1b1b;">Options</div>
<div style="position:absolute;left:1302.5px;top:255.5px;width:0;height:0;border-left:3.0px solid transparent;border-right:3.0px solid transparent;border-top:3px solid #666;"></div>
<div style="position:absolute;left:1122px;top:271px;width:192px;height:24px;box-sizing:border-box;border:1px solid #b0b0b0;border-radius:3px;background:linear-gradient(#fcfcfc,#ededed);"></div>
<svg style="position:absolute;left:1124px;top:276px" width="14" height="14" viewBox="0 0 14 14"><defs><linearGradient id="pg2" x1="0" y1="0" x2="0" y2="1"><stop offset="0" stop-color="#9be070"/><stop offset="1" stop-color="#3ea325"/></linearGradient></defs><path d="M4.76,0.5 h4.48 v4.26 h4.26 v4.48 h-4.26 v4.26 h-4.48 v-4.26 h-4.26 v-4.48 h4.26 z" fill="url(#pg2)" stroke="#3f9a25" stroke-width="0.7"/></svg>
<div class="t" style="left:1143.2px;top:275.00px;font-size:13px;line-height:15px;color:#1b1b1b;">Add Channel</div>
<div style="position:absolute;left:1302.5px;top:281.5px;width:0;height:0;border-left:3.0px solid transparent;border-right:3.0px solid transparent;border-top:3px solid #666;"></div>
<div style="position:absolute;left:1122px;top:296px;width:192px;height:81px;box-sizing:border-box;border:4px solid #ffd500;background:#efefef;"></div>
<div style="position:absolute;left:1126px;top:304px;width:14px;height:14px;box-sizing:border-box;border:1px solid #b4b4b4;background:#fff;border-radius:1px;"></div>
<svg style="position:absolute;left:1126px;top:304px" width="14" height="14"><path d="M3.2,7.2 L5.8,10.8 L10.5,2.8" fill="none" stroke="#111" stroke-width="1.9"/></svg>
<div class="t" style="left:1145.2px;top:303.80px;font-size:13px;line-height:15px;color:#1b1b1b;">Channel 1 (1±)</div>
<div style="position:absolute;left:1283px;top:300px;width:27px;height:22px;box-sizing:border-box;border:1px solid #b0b0b0;border-radius:3px;background:linear-gradient(#fcfcfc,#ededed);"></div>
<svg style="position:absolute;left:1288px;top:303px;overflow:visible" width="16" height="16" viewBox="0 0 16 16"><defs><linearGradient id="gg6" x1="0" y1="0" x2="1" y2="1"><stop offset="0" stop-color="#f4f6f8"/><stop offset="0.55" stop-color="#d3d8dc"/><stop offset="1" stop-color="#7f8a93"/></linearGradient></defs><ellipse cx="9.50" cy="10.00" rx="6.72" ry="6.08" fill="rgba(0,0,0,0.10)"/><g fill="#7b868f" stroke="#7b868f" stroke-width="1.3"><circle cx="14.11" cy="9.89" r="1.68"/><circle cx="10.99" cy="13.66" r="1.68"/><circle cx="6.11" cy="14.11" r="1.68"/><circle cx="2.34" cy="10.99" r="1.68"/><circle cx="1.89" cy="6.11" r="1.68"/><circle cx="5.01" cy="2.34" r="1.68"/><circle cx="9.89" cy="1.89" r="1.68"/><circle cx="13.66" cy="5.01" r="1.68"/><circle cx="8.0" cy="8.0" r="5.44"/></g><g fill="url(#gg6)"><circle cx="14.11" cy="9.89" r="1.68"/><circle cx="10.99" cy="13.66" r="1.68"/><circle cx="6.11" cy="14.11" r="1.68"/><circle cx="2.34" cy="10.99" r="1.68"/><circle cx="1.89" cy="6.11" r="1.68"/><circle cx="5.01" cy="2.34" r="1.68"/><circle cx="9.89" cy="1.89" r="1.68"/><circle cx="13.66" cy="5.01" r="1.68"/><circle cx="8.0" cy="8.0" r="5.44"/></g><ellipse cx="7.80" cy="8.20" rx="2.56" ry="3.52" transform="rotate(-25 8.0 8.0)" fill="#4e5a64"/><ellipse cx="8.96" cy="7.68" rx="1.12" ry="2.40" transform="rotate(-25 8.0 8.0)" fill="#f3f5f7"/></svg>
<div class="t" style="left:1130.3px;top:327.80px;font-size:13px;line-height:15px;color:#1b1b1b;">Offset:</div>
<div style="position:absolute;left:1199px;top:323px;width:110px;height:24px;box-sizing:border-box;border:1px solid #b0b0b0;border-radius:3px;background:#fff;"></div>
<div style="position:absolute;left:1288px;top:324px;width:20px;height:22px;box-sizing:border-box;border-left:1px solid #b8b8b8;border-radius:0 2px 2px 0;background:linear-gradient(#fbfbfb,#ececec);"></div>
<div class="t" style="left:1203px;top:327.60px;font-size:13px;line-height:15px;color:#1b1b1b;">-20 V</div>
<div style="position:absolute;left:1294.5px;top:333.0px;width:0;height:0;border-left:4.0px solid transparent;border-right:4.0px solid transparent;border-top:4px solid #4a4a4a;"></div>
<div class="t" style="left:1130.3px;top:352.70px;font-size:13px;line-height:15px;color:#1b1b1b;">Range:</div>
<div style="position:absolute;left:1199px;top:348px;width:110px;height:24px;box-sizing:border-box;border:1px solid #b0b0b0;border-radius:3px;background:#fff;"></div>
<div style="position:absolute;left:1288px;top:349px;width:20px;height:22px;box-sizing:border-box;border-left:1px solid #b8b8b8;border-radius:0 2px 2px 0;background:linear-gradient(#fbfbfb,#ececec);"></div>
<div class="t" style="left:1203px;top:352.60px;font-size:13px;line-height:15px;color:#1b1b1b;">5 V/div</div>
<div style="position:absolute;left:1294.5px;top:358.0px;width:0;height:0;border-left:4.0px solid transparent;border-right:4.0px solid transparent;border-top:4px solid #4a4a4a;"></div>
<div style="position:absolute;left:1122px;top:377px;width:192px;height:31px;box-sizing:border-box;border:4px solid #00bcf8;border-top-width:5px;background:#efefef;"></div>
<div style="position:absolute;left:1126px;top:386px;width:14px;height:14px;box-sizing:border-box;border:1px solid #b4b4b4;background:#fff;border-radius:1px;"></div>
<div class="t" style="left:1145.2px;top:386.20px;font-size:13px;line-height:15px;color:#1b1b1b;">Channel 2 (2±)</div>
<div style="position:absolute;left:1283px;top:382px;width:27px;height:22px;box-sizing:border-box;border:1px solid #b0b0b0;border-radius:3px;background:linear-gradient(#fcfcfc,#ededed);"></div>
<svg style="position:absolute;left:1288px;top:385px;overflow:visible" width="16" height="16" viewBox="0 0 16 16"><defs><linearGradient id="gg7" x1="0" y1="0" x2="1" y2="1"><stop offset="0" stop-color="#f4f6f8"/><stop offset="0.55" stop-color="#d3d8dc"/><stop offset="1" stop-color="#7f8a93"/></linearGradient></defs><ellipse cx="9.50" cy="10.00" rx="6.72" ry="6.08" fill="rgba(0,0,0,0.10)"/><g fill="#7b868f" stroke="#7b868f" stroke-width="1.3"><circle cx="14.11" cy="9.89" r="1.68"/><circle cx="10.99" cy="13.66" r="1.68"/><circle cx="6.11" cy="14.11" r="1.68"/><circle cx="2.34" cy="10.99" r="1.68"/><circle cx="1.89" cy="6.11" r="1.68"/><circle cx="5.01" cy="2.34" r="1.68"/><circle cx="9.89" cy="1.89" r="1.68"/><circle cx="13.66" cy="5.01" r="1.68"/><circle cx="8.0" cy="8.0" r="5.44"/></g><g fill="url(#gg7)"><circle cx="14.11" cy="9.89" r="1.68"/><circle cx="10.99" cy="13.66" r="1.68"/><circle cx="6.11" cy="14.11" r="1.68"/><circle cx="2.34" cy="10.99" r="1.68"/><circle cx="1.89" cy="6.11" r="1.68"/><circle cx="5.01" cy="2.34" r="1.68"/><circle cx="9.89" cy="1.89" r="1.68"/><circle cx="13.66" cy="5.01" r="1.68"/><circle cx="8.0" cy="8.0" r="5.44"/></g><ellipse cx="7.80" cy="8.20" rx="2.56" ry="3.52" transform="rotate(-25 8.0 8.0)" fill="#4e5a64"/><ellipse cx="8.96" cy="7.68" rx="1.12" ry="2.40" transform="rotate(-25 8.0 8.0)" fill="#f3f5f7"/></svg>
</body></html>
